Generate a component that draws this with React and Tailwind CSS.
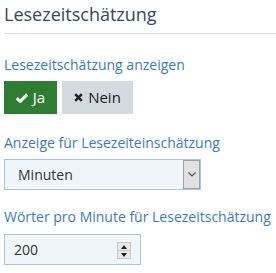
import { useState } from "react";

function App() {
  const [show, setShow] = useState(true);
  const [unit, setUnit] = useState("Minuten");
  const [wpm, setWpm] = useState(200);

  return (
    <div
      className="bg-white w-[276px] h-[273px] overflow-hidden"
      style={{ fontFamily: '"Open Sans", sans-serif' }}
    >
      <div className="pl-[4px]">
        <h1 className="text-[18px] leading-[26px] pt-[1px] text-[#34495e]">
          Lesezeitschätzung
        </h1>
        <div className="mt-[6px] border-b border-[#dddddd]" />

        {/* anzeigen */}
        <div className="mt-[22px] text-[14px] leading-[18px] text-[#3a7bbf]">
          Lesezeitschätzung anzeigen
        </div>
        <div className="flex gap-[5px] mt-[7px]">
          <button
            type="button"
            onClick={() => setShow(true)}
            className={
              "h-[33px] w-[53px] flex items-center justify-center gap-[5px] text-[15px] " +
              (show ? "bg-[#2e7d32] text-white" : "bg-[#d3dbe1] text-[#222]")
            }
          >
            <svg width="12" height="10" viewBox="0 0 12 10">
              <path d="M0.8 5.2 L4.3 8.4 L11.2 1.4" fill="none" stroke="currentColor" strokeWidth="3" />
            </svg>
            Ja
          </button>
          <button
            type="button"
            onClick={() => setShow(false)}
            className={
              "h-[33px] w-[71px] flex items-center justify-center gap-[5px] text-[15px] " +
              (!show ? "bg-[#2e7d32] text-white" : "bg-[#d3dbe1] text-[#222]")
            }
          >
            <svg width="9" height="9" viewBox="0 0 9 9">
              <path d="M1.2 1.2 L7.8 7.8 M7.8 1.2 L1.2 7.8" fill="none" stroke="currentColor" strokeWidth="2.5" />
            </svg>
            Nein
          </button>
        </div>

        {/* Anzeige */}
        <div className="mt-[20px] text-[14px] leading-[18px] text-[#3a7bbf]">
          Anzeige für Lesezeiteinschätzung
        </div>
        <div className="relative mt-[7px] w-[197px] h-[31px]">
          <select
            value={unit}
            onChange={(e) => setUnit(e.target.value)}
            className="appearance-none w-full h-full border border-[#a9c5de] bg-[#f0f5fa] pl-[13px] text-[14px] text-[#333]"
          >
            <option>Minuten</option>
            <option>Sekunden</option>
          </select>
          <div className="pointer-events-none absolute right-[1px] top-[1px] bottom-[1px] w-[17px] bg-[#e1e1e1] border border-[#a0a0a0] flex items-center justify-center">
            <svg width="8" height="5" viewBox="0 0 8 5">
              <path d="M0.5 0.5 L4 4 L7.5 0.5" fill="none" stroke="#555" strokeWidth="1.2" />
            </svg>
          </div>
        </div>

        {/* Wörter */}
        <div className="mt-[18px] text-[14px] leading-[18px] text-[#3a7bbf]">
          Wörter pro Minute für Lesezeitschätzung
        </div>
        <div className="relative mt-[8px] w-[137px] h-[31px] border border-[#a9c5de] bg-[#f0f5fa] flex items-center">
          <input
            type="text"
            value={wpm}
            onChange={(e) => setWpm(e.target.value)}
            className="w-[100px] pl-[9px] bg-transparent text-[14px] text-[#333] outline-none"
          />
          <div className="absolute left-[112px] top-[7px] w-[14px] h-[17px] flex flex-col border border-[#c8c8c8] bg-[#e8e8e8]">
            <div className="flex-1 flex items-center justify-center border-b border-[#c8c8c8]">
              <svg width="6" height="4" viewBox="0 0 6 4"><path d="M0 4 L3 0 L6 4 Z" fill="#222" /></svg>
            </div>
            <div className="flex-1 flex items-center justify-center">
              <svg width="6" height="4" viewBox="0 0 6 4"><path d="M0 0 L3 4 L6 0 Z" fill="#222" /></svg>
            </div>
          </div>
        </div>
      </div>
    </div>
  );
}

export default App;
